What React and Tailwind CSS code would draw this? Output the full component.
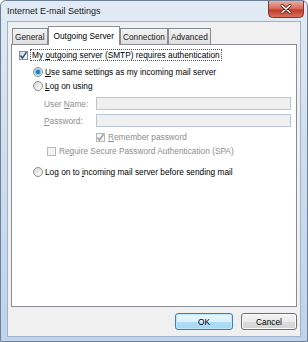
import React from 'react'

const font = { fontFamily: '"Liberation Sans", Arial, sans-serif' }

function Check({ checked, disabled }) {
  return (
    <span
      className={`relative flex h-[9px] w-[9px] shrink-0 items-center justify-center border ${
        disabled ? 'border-[#b5b9bf] bg-[#f4f4f4]' : 'border-[#8f8f8f] bg-[linear-gradient(135deg,#d8d8d8,#ffffff)]'
      }`}
    >
      {checked && (
        <svg width="9" height="9" viewBox="0 0 9 9" className="absolute">
          <path
            d="M1.5 4.5 L3.5 7 L7.5 1.2"
            fill="none"
            stroke={disabled ? '#9a9a9a' : '#1e4f93'}
            strokeWidth="1.4"
          />
        </svg>
      )}
    </span>
  )
}

function Radio({ checked }) {
  return (
    <span className="flex h-[10px] w-[10px] shrink-0 items-center justify-center rounded-full border border-[#8e8f8f] bg-[linear-gradient(135deg,#d4d4d4,#ffffff)]">
      {checked && <span className="h-[4px] w-[4px] rounded-full bg-[#1d7fc0] shadow-[0_0_1px_1px_#62b8e8]" />}
    </span>
  )
}

function Tab({ label, active }) {
  if (active) {
    return (
      <div className="relative z-10 -mb-px flex h-[19px] items-center border border-b-0 border-[#898c95] bg-white px-[5px] text-black">
        {label}
      </div>
    )
  }
  return (
    <div className="mt-[2px] flex h-[16px] items-center border border-b-0 border-[#898c95] bg-[linear-gradient(#f3f3f3,#e0e0e0)] px-[2px] text-[#222]">
      {label}
    </div>
  )
}

// window close button, drawn as one graphic
function CloseButton() {
  return (
    <svg width="36" height="17" viewBox="0 0 36 17" className="mr-[3px] shrink-0">
      <defs>
        <linearGradient id="closeBg" x1="0" y1="0" x2="0" y2="1">
          <stop offset="0" stopColor="#eab2a4" />
          <stop offset="0.45" stopColor="#d66c5c" />
          <stop offset="0.55" stopColor="#c43b2d" />
          <stop offset="1" stopColor="#d9745f" />
        </linearGradient>
      </defs>
      <path d="M0.5 0 V12.5 Q0.5 16.5 4.5 16.5 H31.5 Q35.5 16.5 35.5 12.5 V0" fill="url(#closeBg)" stroke="#7d3a35" />
      <path d="M14 4.5 L22 11.5 M22 4.5 L14 11.5" stroke="#5a2520" strokeWidth="3" strokeLinecap="round" />
      <path d="M14 4.5 L22 11.5 M22 4.5 L14 11.5" stroke="#ffffff" strokeWidth="1.6" strokeLinecap="round" />
    </svg>
  )
}

export default function App() {
  return (
    <div style={font} className="flex h-[342px] w-[308px] flex-col rounded-t-[6px] border border-[#6e8199] bg-[linear-gradient(#e2ebf5,#d0dfee_40%,#bed4eb)] text-[8.3px] leading-[12px] text-black">
      {/* title bar */}
      <div className="flex h-[20px] shrink-0 items-start justify-between">
        <div className="pl-[6px] pt-[4px] text-[9px] text-[#1b1b1b]">Internet E-mail Settings</div>
        <CloseButton />
      </div>

      {/* client area */}
      <div className="mx-[6px] mb-[4px] flex flex-1 flex-col border border-[#9fb3c8] bg-[#f0f0f0] px-[3px] pt-[4px]">
        <div className="flex pl-[1px]">
          <Tab label="General" />
          <Tab label="Outgoing Server" active />
          <Tab label="Connection" />
          <Tab label="Advanced" />
        </div>

        <div className="flex h-[263px] flex-col border border-[#898c95] bg-white pl-[7px] pr-[5px] pt-[4px]">
          <div className="flex h-[12px] items-center gap-[2px]">
            <Check checked />
            <span className="border border-dotted border-[#555] px-px leading-[10px]">
              My <u>o</u>utgoing server (SMTP) requires authentication
            </span>
          </div>

          <div className="ml-[14px] mt-[5px] flex h-[12px] items-center gap-[2px]">
            <Radio checked />
            <span>
              <u>U</u>se same settings as my incoming mail server
            </span>
          </div>

          <div className="ml-[14px] mt-[2px] flex h-[12px] items-center gap-[2px]">
            <Radio />
            <span>
              <u>L</u>og on using
            </span>
          </div>

          <div className="ml-[25px] mt-[5px] flex h-[13px] items-center text-[#8d8d8d]">
            <span className="w-[52px]">
              User <u>N</u>ame:
            </span>
            <div className="h-[13px] flex-1 border border-[#b9c6d4] bg-[#f0f0f0]" />
          </div>

          <div className="ml-[25px] mt-[4px] flex h-[13px] items-center text-[#8d8d8d]">
            <span className="w-[52px]">
              <u>P</u>assword:
            </span>
            <div className="h-[13px] flex-1 border border-[#b9c6d4] bg-[#f0f0f0]" />
          </div>

          <div className="ml-[77px] mt-[4px] flex h-[12px] items-center gap-[3px] text-[#8d8d8d]">
            <Check checked disabled />
            <span>
              <u>R</u>emember password
            </span>
          </div>

          <div className="ml-[28px] mt-[2px] flex h-[12px] items-center gap-[3px] text-[#8d8d8d]">
            <Check disabled />
            <span>
              Re<u>q</u>uire Secure Password Authentication (SPA)
            </span>
          </div>

          <div className="ml-[14px] mt-[9px] flex h-[12px] items-center gap-[2px]">
            <Radio />
            <span>
              Log on to <u>i</u>ncoming mail server before sending mail
            </span>
          </div>
        </div>

        <div className="mt-[6px] flex justify-end gap-[8px]">
          <button className="h-[17px] w-[58px] rounded-[3px] border border-[#3c7fb1] bg-[linear-gradient(#ecf7fd,#dcf1fc_50%,#b0ddf6_51%,#a6d8f4)] shadow-[inset_0_0_0_1px_#bfe6fa]">
            OK
          </button>
          <button className="h-[17px] w-[56px] rounded-[3px] border border-[#707070] bg-[linear-gradient(#f3f3f3,#ebebeb_50%,#dddddd_51%,#d3d3d3)] shadow-[inset_0_0_0_1px_#fcfcfc]">
            Cancel
          </button>
        </div>
      </div>
    </div>
  )
}
